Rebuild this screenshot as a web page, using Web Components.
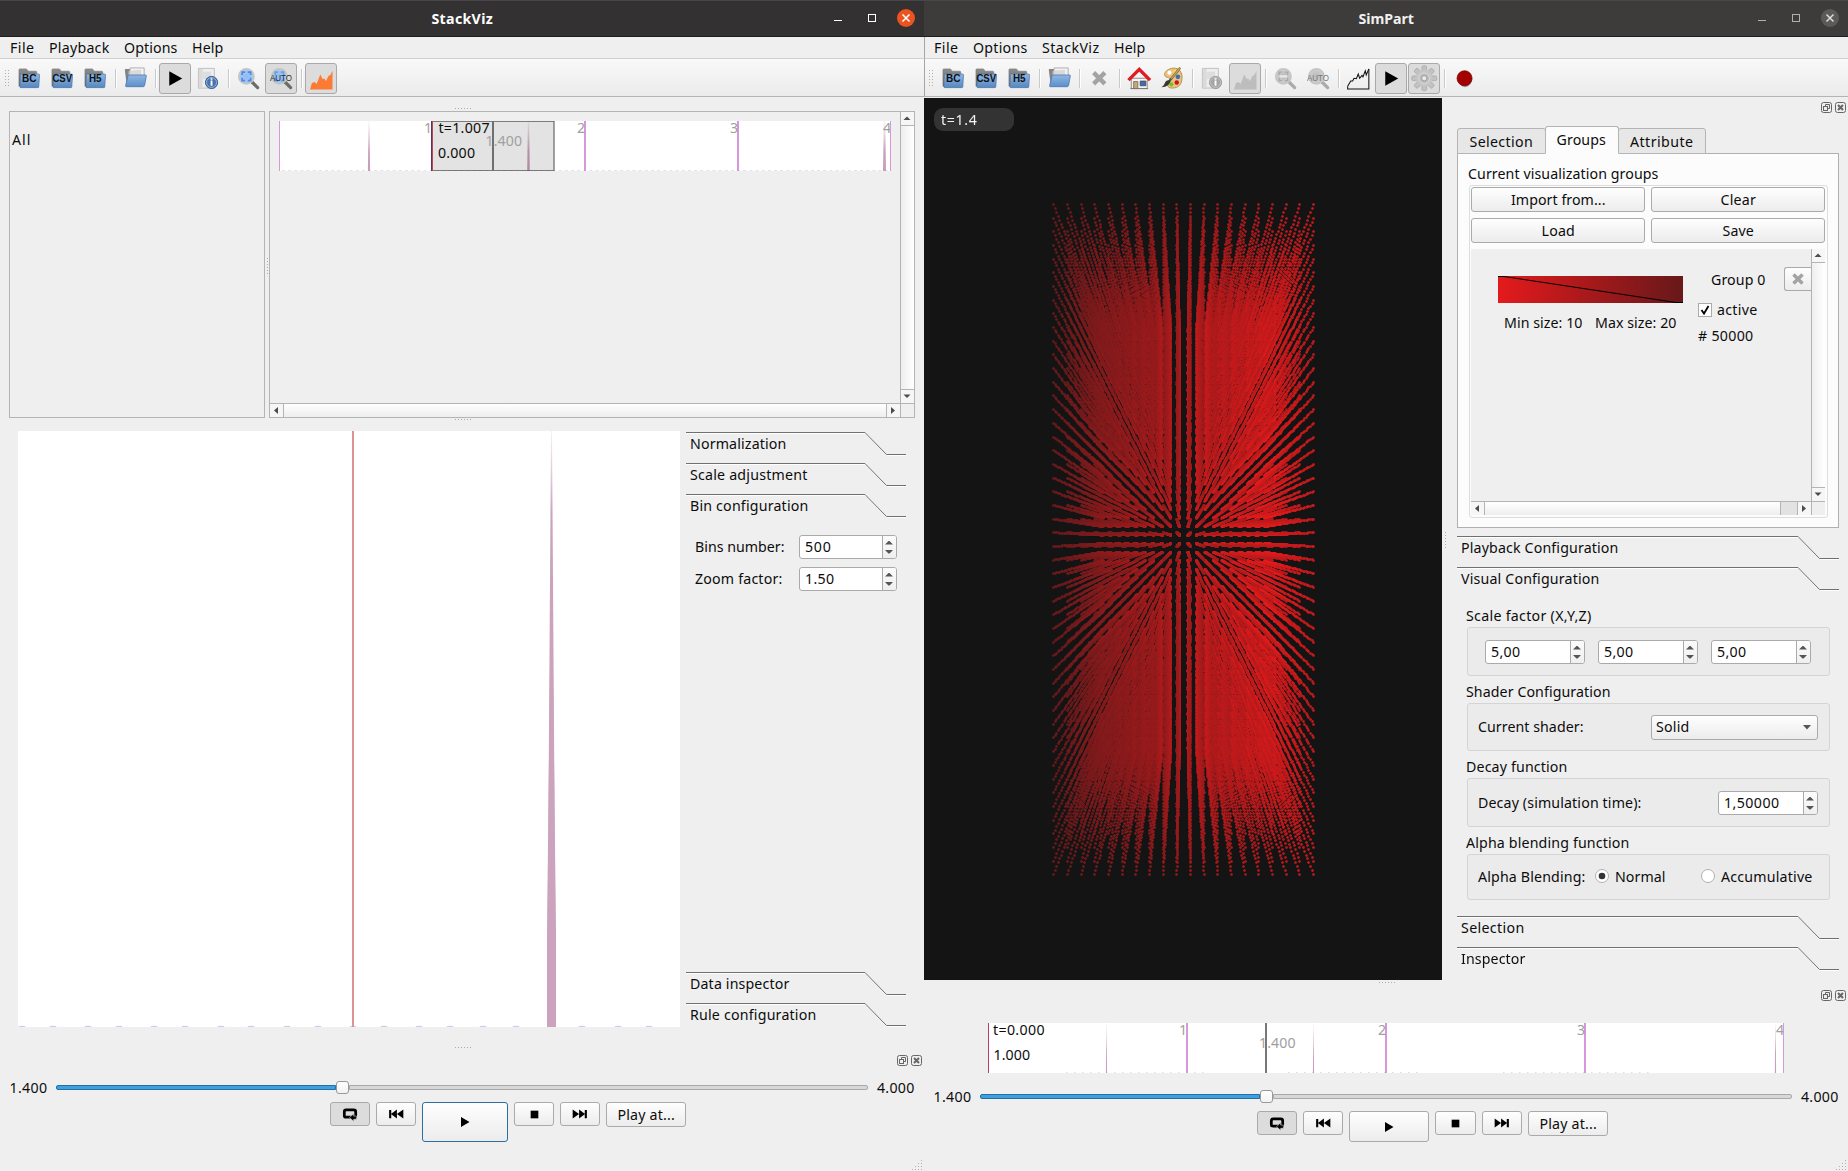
<!DOCTYPE html>
<html lang="en">
<head>
<meta charset="utf-8">
<title>StackViz / SimPart</title>
<style>
html,body{margin:0;padding:0;width:1848px;height:1171px;overflow:hidden;background:#efefef}
body{font-family:"Noto Sans","Open Sans",sans-serif;font-size:14.2px;line-height:20px;color:#0c0c0c;display:flex}
</style>
</head>
<body>
<stackviz-window></stackviz-window>
<simpart-window></simpart-window>
<script>
const BASE = '*{box-sizing:border-box} .row{display:flex} .col{display:flex;flex-direction:column} svg{display:block;flex:none}';
function define(name, css, html, after) {
  customElements.define(name, class extends HTMLElement {
    connectedCallback() {
      if (this.shadowRoot) return;
      const root = this.attachShadow({mode: 'open'});
      root.innerHTML = '<style>' + BASE + css + '</style>' + (typeof html === 'function' ? html(this) : html);
      if (after) after(this, root);
    }
  });
}
const num = (el, name, d) => el.hasAttribute(name) ? +el.getAttribute(name) : d;

/* Text label spread to a given advance width */
define('ui-text', ':host{display:block;flex:none;white-space:pre;height:20px}span{display:inline-block}', '<span><slot></slot></span>', (el, root) => {
  const w = num(el, 'w', 0);
  if (!w) return;
  const natural = root.querySelector('span').getBoundingClientRect().width;
  el.style.width = w + 'px';
  el.style.letterSpacing = ((w + .5 - natural) / Math.max(1, el.textContent.length)).toFixed(3) + 'px';
});

/* ---------- icons ---------- */
const folderTag = t => `<defs><linearGradient id="f" x2="0" y2="1"><stop stop-color="#8fb7e3"/><stop offset="1" stop-color="#5787be"/></linearGradient><linearGradient id="k" x2="0" y2="1"><stop stop-color="#8d8d8d"/><stop offset="1" stop-color="#666"/></linearGradient></defs>
<path d="M1 3q0-1 1-1h7l2 2.500h8q1 0 1 1v15H1z" fill="url(#k)" stroke="#777" stroke-width=".6"/>
<path d="M2.500 8.500q0-1 1-1h18.500q1 0 1 1l-.8 12.500q0 1-1 1H3q-1 0-1-1z" fill="url(#f)" stroke="#4574ad" stroke-width=".7"/>
<text x="12" y="16.500" text-anchor="middle" font-family="Liberation Sans" font-size="11.500" font-weight="bold" textLength="${t==='CSV'?21:t==='BC'?15.500:13.500}" lengthAdjust="spacingAndGlyphs" fill="#101010">${t}</text>`;
const lens = (c, r, h) => `<defs><radialGradient id="l"><stop stop-color="${c[0]}"/><stop offset="1" stop-color="${c[1]}"/></radialGradient></defs><path d="M16 16l6 6" stroke="${h}" stroke-width="3.400" stroke-linecap="round"/><circle cx="10" cy="10" r="8" fill="url(#l)" stroke="${r}" stroke-width="2"/>`;
const BLUE = [['#8fbcf5', '#a8c8f0'], '#c3c7c4', '#6c6c68'], GREY = [['#bbb', '#cfcfcf'], '#c6c6c6', '#aaa'];
const cross = c => `<path d="M8.500 5.500H5.500V8.500M11.500 5.500h3V8.500M5.500 11.500v3h3M14.500 11.500v3h-3" fill="none" stroke="${c}" stroke-width="1.800"/>`;
const autoText = c => `<text x="0" y="15" font-family="Liberation Sans" font-size="9.800" textLength="23.500" lengthAdjust="spacingAndGlyphs" fill="${c}">AUTO</text>`;
const info = (a, b) => `<path d="M1.500 1.500h17v21h-17z" fill="#eee" stroke="#bdbdbd"/><path d="M2 2h4v20H2z" fill="#dadada"/><path d="M6 5h9v8H6z" fill="#ddd"/><circle cx="15.500" cy="16.500" r="6.500" fill="${a}" stroke="${b}"/><circle cx="15.500" cy="16.500" r="5.300" fill="none" stroke="#c5d3e8" stroke-width=".7"/><path d="M15.500 14.500v5.500M15.500 12v1.600" stroke="#fff" stroke-width="2"/>`;
const area = c => `<path d="M0 24L2 17l3-1 2 2 4-10 2.500 5L15 12l2 3 3-6h1.500L24 4v20z" fill="${c}"/>`;
const ICONS = {
  bc: folderTag('BC'), csv: folderTag('CSV'), h5: folderTag('H5'),
  open: `<defs><linearGradient id="o" x2="0" y2="1"><stop stop-color="#8fb7e3"/><stop offset="1" stop-color="#5d8fcb"/></linearGradient></defs><path d="M.8 3q0-1 1-1h5l2 2h9l4 16H3z" fill="#858585"/><path d="M6.500 1h15v12h-16z" fill="#f3f3f3" stroke="#999" stroke-width=".8"/><path d="M5 4l13-1 1 10H4z" fill="#cfcfcf" opacity=".7"/><path d="M4.500 8.500h18.500q1 0 .8 1L22 19.500q-.3 1.500-1.500 1.500H2.500q-1 0-.8-1z" fill="url(#o)" stroke="#4574ad" stroke-width=".8"/>`,
  play: '<path d="M5.500 4.500L19 12 5.500 19.500z" fill="#000"/>',
  info: info('#4673ae', '#2c5792'), infog: info('#a5a5a5', '#999'),
  zoom: lens(...BLUE) + cross('#4b8ae6'), zoomg: lens(...GREY) + '<path d="M8.500 5.500H5.500V8.500M11.500 5.500h3V8.500M5.500 11.500v3h3M14.500 11.500v3h-3" fill="none" stroke="#a9a9a9" stroke-width="1.500"/><path d="M6 10h8" stroke="#e8e8e8" stroke-width="2.500"/>',
  auto: lens(...BLUE) + cross('#6d9fe4') + autoText('#2c2c2c'),
  autog: lens(...GREY) + autoText('#777'),
  area: area('#fb7b35'), areag: area('#bdbdbd'),
  close: '<path d="M6 6l12 12M18 6L6 18" stroke="#a3a3a3" stroke-width="4.600"/>',
  home: '<path d="M3.500 12h17v11h-17z" fill="#f4f4f2" stroke="#888"/><path d="M.5 14L12 2.500 23.500 14" fill="none" stroke="#e01b20" stroke-width="3.600"/><path d="M6 15.500h4.500V23H6z" fill="#c9a86a" stroke="#666" stroke-width=".8"/><path d="M13 15h6v5h-6z" fill="#3b6fb5" stroke="#444" stroke-width=".8"/><path d="M2.500 23h19" stroke="#777"/>',
  palette: '<path d="M11 1.500c6-1.500 11.500 2 11.500 9.500s-4 11.500-10.500 11.500c-6 0-6-5-3.500-7C11 13 9 11.500 6.500 11 2 10 3 3.500 11 1.500z" fill="#e7c484" stroke="#b08538" stroke-width=".9"/><circle cx="9" cy="6" r="2.200" fill="#fff"/><circle cx="18" cy="10.500" r="2.500" fill="#3b6fb5"/><circle cx="16.800" cy="16.500" r="2.400" fill="#cf1414"/><circle cx="11" cy="18.500" r="2.200" fill="#6dc421"/><circle cx="15" cy="5" r="1.700" fill="#f3dc50"/><path d="M20.500.8L8.500 15.500" stroke="#555" stroke-width="2.400"/><path d="M20.500.8L11 12.500" stroke="#e3a53d" stroke-width="1.300"/><path d="M10 14.500c0 4-4 7-9.500 7.200 2-1.500 3-3 4-5.500 1-2 3-2.800 5.500-1.700z" fill="#3c3630"/>',
  line: '<path d="M.7 20.500V23.500H23.300V2" fill="none" stroke="#111" stroke-width="1.100"/><path d="M.7 20.500L4 15l2 0 1.500-3 2.500.5L12 7.500l1.500 4.500L16 9l1 1.500L19.500 4l1 4.500L23.300 2" fill="none" stroke="#111" stroke-width="1.100"/>',
  gear: (() => { let s = ''; for (let i = 0; i < 8; i++) s += `<rect x="9.500" y="-1.300" width="5" height="7" rx="1.500" transform="rotate(${i * 45} 12 12)"/>`;
    return `<g fill="#c2c2c2" stroke="#a8a8a8" stroke-width=".8">${s}</g><circle cx="12" cy="12" r="8.800" fill="#c6c6c6"/><circle cx="12" cy="12" r="5.600" fill="#bbb" stroke="#dcdcdc"/><circle cx="12" cy="12" r="2.800" fill="#e9e9e9" stroke="#999"/>`; })(),
  rec: '<ellipse cx="13" cy="13" rx="7.500" ry="8.500" fill="#555" opacity=".5"/><circle cx="12.300" cy="12" r="8" fill="#a40000" stroke="#7c0000" stroke-width=".8"/>',
  loop: '<rect x="5.800" y="7.500" width="12.400" height="8" rx="2" fill="none" stroke="#000" stroke-width="3"/><path d="M11.500 15.800l4.500-4v2.500h3v3.400h-3V20z" fill="#000" stroke="#dcdcdc" stroke-width=".6"/>',
  prev: '<path d="M4.500 7.500h2.300v9H4.500zM13 7v10L6.500 12zM20 7v10l-7-5z" fill="#000"/>',
  next: '<path d="M17.200 7.500h2.300v9h-2.300zM4 7v10l7-5zM11 7v10l6.500-5z" fill="#000"/>',
  go: '<path d="M8 7l8.500 5L8 17z" fill="#000"/>',
  stop: '<path d="M8 8h8v8H8z" fill="#000"/>'
};
define('ui-icon', ':host{display:block;flex:none}svg{overflow:visible}', el => `<svg width="${num(el,'size',22)}" height="${num(el,'size',22)}" viewBox="0 0 24 24">${ICONS[el.getAttribute('name')]}</svg>`);

define('tool-button', ':host{display:flex;width:32px;height:31px;align-items:center;justify-content:center;border-radius:3px;flex:none;border:1px solid transparent}:host([on]){background:#dcdcdc;border-color:#a9a9a9}',
  el => `<ui-icon name="${el.getAttribute('icon')}" size="${/play/.test(el.getAttribute('icon')) ? 23 : 22.5}"></ui-icon>`);
define('tool-sep', ':host{display:flex;width:6px;height:19px;justify-content:center}i{width:1px;background:#c9c9c9;box-shadow:1px 0 #fff}', '<i></i>');
define('tool-bar', ':host{display:flex;height:38px;background:linear-gradient(#f9f9f9,#ebebeb);border-bottom:1px solid #b4b4b4;align-items:center;gap:1px;padding:1px 0 0 5px;flex:none}svg{margin-right:3px}',
  () => { let s = ''; for (let i = 0; i < 6; i++) s += `<rect y="${i * 3}" x="0" width="1" height="1"/><rect y="${i * 3}" x="3" width="1" height="1"/>`; return `<svg width="4" height="17" fill="#b0b0b0">${s}</svg><slot></slot>`; });
define('menu-bar', ':host{display:flex;height:22px;gap:15px;padding:1px 0 0 10px;background:#efefef;border-bottom:1px solid #d0d0d0;flex:none}', '<slot></slot>');

define('title-bar', ':host{display:grid;grid-template-columns:1fr auto 1fr;height:37px;padding-top:8px;border-top:1px solid #484646;border-bottom:1px solid #1e1e1e;background:#333132;color:#fff;font-weight:bold;flex:none}:host([inactive]){background:#3e3c3a;color:#f0f0f0}svg{justify-self:end;margin-right:8px}',
  el => { const off = el.hasAttribute('inactive'), c = off ? '#b0afae' : '#fff';
    return `<i></i><slot></slot><svg width="82" height="20"><path d="M0 11.500h8" stroke="${c}"/><rect x="34.500" y="5.500" width="7" height="7" fill="none" stroke="${c}"/><circle cx="72" cy="9" r="9" fill="${off ? '#5c5a59' : '#e95420'}"/><path d="M68.500 5.500l7 7M75.500 5.500l-7 7" stroke="${off ? '#ddd' : '#fff'}" stroke-width="1.500"/></svg>`; });

define('split-dots', ':host{display:block;flex:none}', el => {
  const v = el.hasAttribute('vertical'); let s = '';
  for (let i = 0; i < 6; i++) s += v ? `<rect x="0" y="${i * 3}" width="1" height="1"/>` : `<rect x="${i * 3}" y="0" width="1" height="1"/>`;
  return `<svg width="${v ? 1 : 16}" height="${v ? 16 : 1}" fill="#aaa">${s}</svg>`;
});
define('dock-buttons', ':host{display:flex;justify-content:flex-end;height:11px;padding-right:2px;flex:none}',
  '<svg width="25" height="11" fill="none" stroke="#666"><rect x=".5" y=".5" width="10" height="10" rx="2"/><path d="M4.500 4V2.500h4v4H7"/><rect x="2.500" y="4.500" width="4" height="4"/><rect x="14.500" y=".5" width="10" height="10" rx="2"/><path d="M17 3l5 5M22 3l-5 5" stroke-width="2"/></svg>');

define('push-button', ':host{display:flex;align-items:center;justify-content:center;flex:none;border:1px solid #aaa;border-radius:3px;background:linear-gradient(#fefefe,#ececec)}:host([down]){background:#dcdcdc}:host([focus]){border-color:#2c6f9e}', '<slot></slot>');
define('spin-box', ':host{display:flex;height:24px;background:#fff;border:1px solid #aaa;border-radius:3px;overflow:hidden;flex:none}.v{flex:1;padding:1px 0 0 5px}.a{width:14px;border-left:1px solid #aaa;background:linear-gradient(#fcfcfc,#efefef)}',
  el => `<div class="v"><slot></slot></div><div class="a"><svg width="13" height="22" fill="#555"><path d="M2 8.500L5.500 5h1L10 8.500zM2 14h8L6.500 17.500h-1z"/></svg></div>`);

/* Tool box page header with the slanted corner */
define('box-header', ':host{display:block;height:31px;flex:none}.t{padding-left:4px;margin-top:-23px}', el => {
  const w = num(el, 'span', 220);
  return `<svg width="${w}" height="25" fill="none"><path d="M0 1.500H${w - 40}L${w - 19} 23.500H${w}" stroke="#fff"/><path d="M0 .5H${w - 41}L${w - 19.500} 22.500H${w}" stroke="#707070"/></svg><div class="t"><slot></slot></div>`;
});

define('scroll-bar', ':host{display:flex;flex:none;background:linear-gradient(90deg,#eee,#fff)}:host([dir=v]){flex-direction:column;width:14px;border-left:1px solid #b4b4b4}:host([dir=h]){height:14px;border-top:1px solid #b4b4b4;background:linear-gradient(#fff,#eee)}.b{width:13px;height:13px;flex:none;background:#f6f6f6}.m{flex:1;border:0 solid #b4b4b4}.g{background:#e2e2e2;flex:none}:host([dir=v]) .m{border-width:1px 0}:host([dir=h]) .m{border-width:0 1px}',
  el => { const v = el.getAttribute('dir') === 'v', g = num(el, 'rest', 0);
    const a = d => `<svg class="b" viewBox="0 0 13 13" fill="#4c4c4c"><path d="${d}"/></svg>`;
    return a(v ? 'M2.500 8L6 4.500 9.500 8z' : 'M8 3L4 6.500 8 10z') + '<div class="m"></div>' + (g ? `<div class="g" style="width:${g}px;border-right:1px solid #b4b4b4"></div>` : '') + a(v ? 'M2.500 4.500h7L6 8z' : 'M4 3l4 3.500L4 10z'); });

/* Timeline strip */
define('time-line', ':host{display:block;background:#fff;height:50px;flex:none}text{font-size:14.2px;font-family:"Noto Sans",sans-serif}', el => {
  const w = num(el, 'w', 612), u = w / 4, right = el.hasAttribute('wide'); let s = '';
  const sp = right ? [[118.5, .55], [325.5, .55], [787.5, .6]] : [[90, 1.1], [249.500, 1.300], [605.500, 1.500]];
  const dots = right ? '<path d="M78 49.500h140M300 49.500h130M515 49.500h150" stroke="#dcdce2" stroke-dasharray="1.500 6.500"/>' : '<path d="M3 49.500h606" stroke="#e4e1f0" stroke-dasharray="3 3.150"/>';
  const text = (x, y, l, t, c) => `<text x="${x}" y="${y}" textLength="${l}" fill="${c}">${t}</text>`;
  const spikes = sp.map(p => `<path d="M${p[0] - p[1] * .5} 0h${p[1]}L${p[0] + p[1]} 50h${-2 * p[1]}z" fill="url(#s)"/>`).join('');
  const ticks = [1, 2, 3].map(i => `<rect x="${Math.round(i * u) - 1}" y="0" width="2" height="50" fill="#d797d9"/>` + text(Math.round(i * u) - 8, 12, 8, i, '#a0a0a0')).join('') + text(w - 8, 12, 8, 4, '#a0a0a0') + `<rect x="${w - 1}" width="1" height="50" fill="#d797d9"/>`;
  const defs = '<defs><linearGradient id="s" x2="0" y2="1"><stop stop-color="#cca3bd" stop-opacity=".1"/><stop offset=".6" stop-color="#cca3bd"/><stop offset="1" stop-color="#c99bb8"/></linearGradient></defs>';
  if (right) s = `<rect width="1" height="50" fill="#b6406a"/>` + text(271, 25, 36.5, '1.400', '#a0a0a0') + '<rect x="277" width="2" height="50" fill="#787878"/>' + text(5, 12, 51.5, 't=0.000', '#0c0c0c') + text(5.5, 37, 36.5, '1.000', '#0c0c0c');
  else s = `<rect width="1" height="50" fill="#d797d9"/><rect x="153" y=".5" width="122" height="49" fill="#000" fill-opacity=".11" stroke="#555" stroke-opacity=".75"/><path d="M275 0v50" stroke="#666" stroke-opacity=".6"/><rect x="152" width="1" height="50" fill="#6d2d50"/><rect x="153" width="1" height="50" fill="#b6485c"/>` + text(206.5, 25, 36.5, '1.400', '#a0a0a0') + '<rect x="213" width="2" height="50" fill="#707070"/>' + text(159.500, 12, 51, 't=1.007', '#0c0c0c') + text(159, 37, 37, '0.000', '#0c0c0c');
  return `<svg width="${w}" height="50">${defs}${dots}${spikes}${ticks}${s}</svg>`;
});

/* Zoomed histogram */
define('histogram-view', ':host{display:block;background:#fff;flex:none}', () => {
  const b = [4,35,70,101,136,167,203,233,269,300,335,366,401,432,465,498,564,600,631].map(x => `<ellipse cx="${x}" cy="596" rx="3.500" ry="1.200"/>`).join('');
  return `<svg width="662" height="596"><defs><linearGradient id="h" x2="0" y2="1"><stop stop-color="#cca3bd" stop-opacity=".15"/><stop offset=".14" stop-color="#cca3bd"/></linearGradient></defs><g fill="#d0cbea">${b}</g><path d="M533 0h1L538 596h-9z" fill="url(#h)"/><path d="M533.500 110L538 500v96h-9v-96z" fill="#cca3bd"/><rect x="334" width="2" height="596" fill="#d99494"/></svg>`;
});

define('slider-track', ':host{display:flex;align-items:center;width:812px;height:14px;flex:none}.f{width:280px;height:5px;background:#3f9fdf;border:1px solid #2270a5;border-radius:2px 0 0 2px}.h{width:13px;height:13px;border:1px solid #999;border-radius:3px;background:linear-gradient(#fff,#f2f2f2)}.r{flex:1;height:5px;background:#d8d8d8;border:1px solid #a9a9a9;border-radius:0 2px 2px 0}', '<div class="f"></div><div class="h"></div><div class="r"></div>');

define('player-controls', ':host{display:block;flex:none}.s{align-items:center;height:20px;padding-left:9.5px;gap:9px}slider-track{margin-bottom:1px}.b{gap:6px;align-items:flex-start}push-button{height:24px;width:40px}',
  el => { const o = num(el, 'offset', 330), pw = num(el, 'playw', 86), ph = num(el, 'playh', 40), sw = num(el, 'stopw', 40);
    return `<div class="row s"><ui-text w="37.5">1.400</ui-text><slider-track></slider-track><ui-text w="37">4.000</ui-text></div>
    <div class="row b" style="margin:4px 0 0 ${o}px"><push-button down><ui-icon name="loop" size="22"></ui-icon></push-button><push-button><ui-icon name="prev" size="22"></ui-icon></push-button><push-button ${el.hasAttribute('focus') ? 'focus' : ''} style="width:${pw}px;height:${ph}px"><ui-icon name="go" size="24"></ui-icon></push-button><push-button style="width:${sw}px"><ui-icon name="stop" size="23"></ui-icon></push-button><push-button><ui-icon name="next" size="22"></ui-icon></push-button><push-button style="width:80px;height:25px"><ui-text w="57">Play at...</ui-text></push-button></div>`; });

define('size-grip', ':host{display:flex;justify-content:flex-end;margin-top:auto;flex:none}', '<svg width="12" height="12" fill="#b0b0b0"><path d="M9 1h1v1H9zM6 4h1v1H6zM9 4h1v1H9zM3 7h1v1H3zM6 7h1v1H6zM9 7h1v1H9zM0 10h1v1H0zM3 10h1v1H3zM6 10h1v1H6zM9 10h1v1H9z"/></svg>');

/* Lattice of 20 x 50 x 50 particles in perspective */
define('particle-view', ':host{display:grid;width:518px;height:882px;background:#141414;flex:none}canvas,.l{grid-area:1/1}.l{align-self:start;margin:10px 0 0 10px;width:80px;height:23px;border-radius:9px;background:#333;color:#f4f4f4;padding:2px 0 0 7px;z-index:1}',
  '<canvas width="518" height="882"></canvas><div class="l"><ui-text w="36">t=1.4</ui-text></div>', (el, root) => {
  const g = root.querySelector('canvas').getContext('2d');
  const cx = 259.2, cy = 440.5, step = 13.68, d = 1096;
  for (let k = 49; k >= 0; k--) {
    const s = d / (d + k * step);
    for (let i = 0; i < 20; i++) {
      const t = Math.min(1, Math.max(0, i / 19 * .78 + k / 49 * .34 - .02));
      const c = `${Math.round(108 + 120 * t)},26,28,`;
      const soft = `rgba(${c}.34)`, core = `rgba(${c}.72)`;
      for (let j = 0; j < 50; j++) {
        const x = Math.round(cx + (i - 9.5) * step * s), y = Math.round(cy + ((j - 24.5) * step + .6) * s);
        g.fillStyle = soft; g.fillRect(x - 1, y - 1, 3, 3);
        g.fillStyle = core; g.fillRect(x - 1, y, 3, 1); g.fillRect(x, y - 1, 1, 3);
      }
    }
  }
});

define('stackviz-window', `:host{display:flex;flex-direction:column;width:924px;height:1171px;background:#efefef}
.top{height:307px;margin-left:9px}.all{width:256px;border:1px solid #b4b4b4;padding:18px 0 0 2px}.mid{width:4px;justify-content:center;align-items:center;padding-top:3px}
.sc{width:646px;border:1px solid #b4b4b4}.v{flex:1}.cn{flex:1}.corner{width:14px;border-left:1px solid #b4b4b4;border-top:1px solid #b4b4b4}
.bot{height:596px;padding-left:18px}.tb{width:220px;margin-left:6px}
.f{height:24px;align-items:center;padding-left:9px;margin-bottom:8px}`,
`<title-bar><ui-text w="61">StackViz</ui-text></title-bar>
<menu-bar><ui-text w="24">File</ui-text><ui-text w="60">Playback</ui-text><ui-text w="53">Options</ui-text><ui-text w="31">Help</ui-text></menu-bar>
<tool-bar><tool-button icon="bc"></tool-button><tool-button icon="csv"></tool-button><tool-button icon="h5"></tool-button><tool-sep></tool-sep><tool-button icon="open"></tool-button><tool-sep></tool-sep><tool-button icon="play" on></tool-button><tool-button icon="info"></tool-button><tool-sep></tool-sep><tool-button icon="zoom"></tool-button><tool-button icon="auto" on></tool-button><tool-sep></tool-sep><tool-button icon="area" on></tool-button></tool-bar>
<split-dots style="margin:11px 0 2px 455px"></split-dots>
<div class="row top"><div class="all"><ui-text w="19">All</ui-text></div><div class="row mid"><split-dots vertical></split-dots></div>
<div class="col sc"><div class="row v"><div class="cn"><time-line w="612" style="margin:9px 0 0 9px;width:612px"></time-line></div><scroll-bar dir="v"></scroll-bar></div><div class="row"><scroll-bar dir="h" style="flex:1"></scroll-bar><div class="corner"></div></div></div></div>
<split-dots style="margin:1px 0 11px 455px"></split-dots>
<div class="row bot"><histogram-view></histogram-view><div class="col tb" style="padding-top:1px">
<box-header><ui-text w="96">Normalization</ui-text></box-header><box-header><ui-text w="117">Scale adjustment</ui-text></box-header><box-header><ui-text w="118">Bin configuration</ui-text></box-header>
<div class="row f" style="margin-top:10px"><ui-text w="89" style="margin-right:15px">Bins number:</ui-text><spin-box style="width:98px"><ui-text w="26">500</ui-text></spin-box></div>
<div class="row f"><ui-text w="87" style="margin-right:17px">Zoom factor:</ui-text><spin-box style="width:98px"><ui-text w="29">1.50</ui-text></spin-box></div>
<box-header style="margin-top:auto"><ui-text w="99">Data inspector</ui-text></box-header><box-header style="height:24px"><ui-text w="126">Rule configuration</ui-text></box-header>
</div></div>
<split-dots style="margin:20px 0 7px 455px"></split-dots>
<dock-buttons></dock-buttons>
<player-controls style="margin-top:12px" offset="330" focus></player-controls><size-grip></size-grip>`);

define('groups-panel', `:host{display:block;width:382px;flex:none}
.tabs{align-items:flex-end;height:28px;margin-bottom:-1px}.tab{height:26px;border:1px solid #b4b4b4;background:#e7e7e7;border-radius:3px 3px 0 0;padding:3px 1px 0 0;display:flex;justify-content:center}.on{height:28px;background:#fcfcfc;border-bottom-color:#fcfcfc;margin:0 -1px;z-index:1;padding-right:2px}
.page{border:1px solid #b0b0b0;background:#fcfcfc;height:375px;padding:10px 0 0 11px}
.box{width:359px;height:333px;border:1px solid #ddd;border-radius:3px;margin-top:1px;padding:1px}
.btns{display:grid;grid-template-columns:174px 174px;column-gap:6px;row-gap:6px}push-button{height:25px}
.area{width:354px;height:266px;margin-top:6px;background:#efefef}.in{flex:1;padding:18px 0 0 27px}.corner{width:14px;border-left:1px solid #b4b4b4;border-top:1px solid #b4b4b4}
.chk{width:14px;height:14px;border:1px solid #aaa;background:#fff}`,
`<div class="row tabs"><div class="tab" style="width:89px"><ui-text w="63">Selection</ui-text></div><div class="tab on" style="width:74px"><ui-text w="49">Groups</ui-text></div><div class="tab" style="width:88px"><ui-text w="63">Attribute</ui-text></div></div>
<div class="page"><ui-text w="190" style="margin-left:-1px">Current visualization groups</ui-text><div class="box"><div class="btns"><push-button><ui-text w="94">Import from...</ui-text></push-button><push-button><ui-text w="35">Clear</ui-text></push-button><push-button><ui-text w="33">Load</ui-text></push-button><push-button><ui-text w="31">Save</ui-text></push-button></div>
<div class="col area"><div class="row" style="flex:1"><div class="row in">
<div style="margin-top:9px"><svg width="185" height="27"><defs><linearGradient id="g"><stop stop-color="#e41a1c"/><stop offset="1" stop-color="#67181a"/></linearGradient></defs><rect width="185" height="27" fill="url(#g)"/><path d="M0 .5h6L178 26.500h7" fill="none" stroke="#000"/></svg><div class="row" style="padding:10px 0 0 6px;gap:13px"><ui-text w="78">Min size: 10</ui-text><ui-text w="81">Max size: 20</ui-text></div></div>
<div style="margin-left:15px"><div class="row"><ui-text w="54" style="margin:3px 19px 0 13px">Group 0</ui-text><push-button style="width:27px;height:24px;border-right:0;border-radius:3px 0 0 3px"><ui-icon name="close" size="18"></ui-icon></push-button></div><div class="row" style="margin-top:9px;gap:5px;align-items:center"><div class="chk"><svg width="12" height="12"><path d="M2.500 6l2.500 3.500L9.500 2" fill="none" stroke="#000" stroke-width="1.800"/></svg></div><ui-text w="40">active</ui-text></div><ui-text w="55" style="margin:6px 0 0 0"># 50000</ui-text></div>
</div><scroll-bar dir="v"></scroll-bar></div><div class="row"><scroll-bar dir="h" rest="17" style="flex:1"></scroll-bar><div class="corner"></div></div></div></div></div>`);

define('group-box', ':host{display:block;flex:none;margin-left:9px}.b{display:flex;align-items:center;width:363px;margin:1px 0 0 1px;background:#ebebeb;border:1px solid #d4d4d4;border-radius:3px}',
  el => `<slot name="title"></slot><div class="b" style="height:${el.getAttribute('h')}px"><slot></slot></div>`);
define('radio-dot', ':host{display:block;flex:none}', el => `<svg width="14" height="14"><circle cx="7" cy="7" r="6.500" fill="#fff" stroke="#b0b0b0"/>${el.hasAttribute('on') ? '<circle cx="7" cy="7" r="3.300" fill="#333"/>' : ''}</svg>`);
define('combo-box', ':host{display:flex;align-items:center;justify-content:space-between;width:167px;height:25px;border:1px solid #aaa;border-radius:3px;background:linear-gradient(#fefefe,#ececec);padding:0 6px 0 4px}', '<slot></slot><svg width="8" height="5"><path d="M0 0h8L4 4.500z" fill="#555"/></svg>');

define('simpart-window', `:host{display:flex;flex-direction:column;width:924px;height:1171px;background:#efefef}
.main{height:882px;margin-top:1px}.h{width:15px;padding:0 0 0 3px;align-items:flex-start}.side{width:391px;padding-top:4px}`,
`<title-bar inactive><ui-text w="55">SimPart</ui-text></title-bar>
<menu-bar style="border-left:1px solid #a5a5a5;padding-left:9px"><ui-text w="24">File</ui-text><ui-text w="54">Options</ui-text><ui-text w="57">StackViz</ui-text><ui-text w="31">Help</ui-text></menu-bar>
<tool-bar style="border-left:1px solid #a5a5a5;padding-left:4px"><tool-button icon="bc"></tool-button><tool-button icon="csv"></tool-button><tool-button icon="h5"></tool-button><tool-sep></tool-sep><tool-button icon="open"></tool-button><tool-sep></tool-sep><tool-button icon="close"></tool-button><tool-sep></tool-sep><tool-button icon="home"></tool-button><tool-button icon="palette"></tool-button><tool-sep></tool-sep><tool-button icon="infog"></tool-button><tool-button icon="areag" on></tool-button><tool-sep></tool-sep><tool-button icon="zoomg"></tool-button><tool-button icon="autog"></tool-button><tool-sep></tool-sep><tool-button icon="line"></tool-button><tool-button icon="play" on></tool-button><tool-button icon="gear" on></tool-button><tool-sep></tool-sep><tool-button icon="rec"></tool-button></tool-bar>
<div class="row main"><particle-view></particle-view><div class="row h"><split-dots vertical style="margin-top:434px"></split-dots></div>
<div class="col side"><dock-buttons></dock-buttons><groups-panel style="margin-top:13px"></groups-panel>
<box-header span="382" style="margin-top:8px"><ui-text w="157">Playback Configuration</ui-text></box-header><box-header span="382"><ui-text w="138">Visual Configuration</ui-text></box-header>
<group-box h="49" style="margin-top:8px"><ui-text slot="title" w="125">Scale factor (X,Y,Z)</ui-text><div style="display:flex;gap:13px;padding-left:17px"><spin-box style="width:100px"><ui-text w="29">5,00</ui-text></spin-box><spin-box style="width:100px"><ui-text w="29">5,00</ui-text></spin-box><spin-box style="width:100px"><ui-text w="29">5,00</ui-text></spin-box></div></group-box>
<group-box h="48" style="margin-top:6px"><ui-text slot="title" w="144">Shader Configuration</ui-text><div style="display:flex;align-items:center;padding-left:10px"><ui-text w="105" style="margin-right:68px">Current shader:</ui-text><combo-box><ui-text w="33">Solid</ui-text></combo-box></div></group-box>
<group-box h="49" style="margin-top:6px"><ui-text slot="title" w="101">Decay function</ui-text><div style="display:flex;align-items:center;padding-left:10px"><ui-text w="163" style="margin-right:77px">Decay (simulation time):</ui-text><spin-box style="width:100px"><ui-text w="55">1,50000</ui-text></spin-box></div></group-box>
<group-box h="46" style="margin-top:6px"><ui-text slot="title" w="163">Alpha blending function</ui-text><div style="display:flex;align-items:center;padding-left:10px"><ui-text w="107">Alpha Blending:</ui-text><radio-dot on style="margin:0 6px 2px 10px"></radio-dot><ui-text w="50">Normal</ui-text><radio-dot style="margin:0 6px 2px 36px"></radio-dot><ui-text w="91">Accumulative</ui-text></div></group-box>
<box-header span="382" style="margin-top:16px"><ui-text w="63">Selection</ui-text></box-header><box-header span="382"><ui-text w="64">Inspector</ui-text></box-header>
</div></div>
<split-dots style="margin:2px 0 7px 455px"></split-dots>
<dock-buttons></dock-buttons>
<time-line wide w="796" style="margin:22px 0 0 64px;width:796px"></time-line>
<player-controls style="margin-top:14px" offset="333" playw="80" playh="31" stopw="41"></player-controls><size-grip></size-grip>`);
</script>
</body>
</html>
